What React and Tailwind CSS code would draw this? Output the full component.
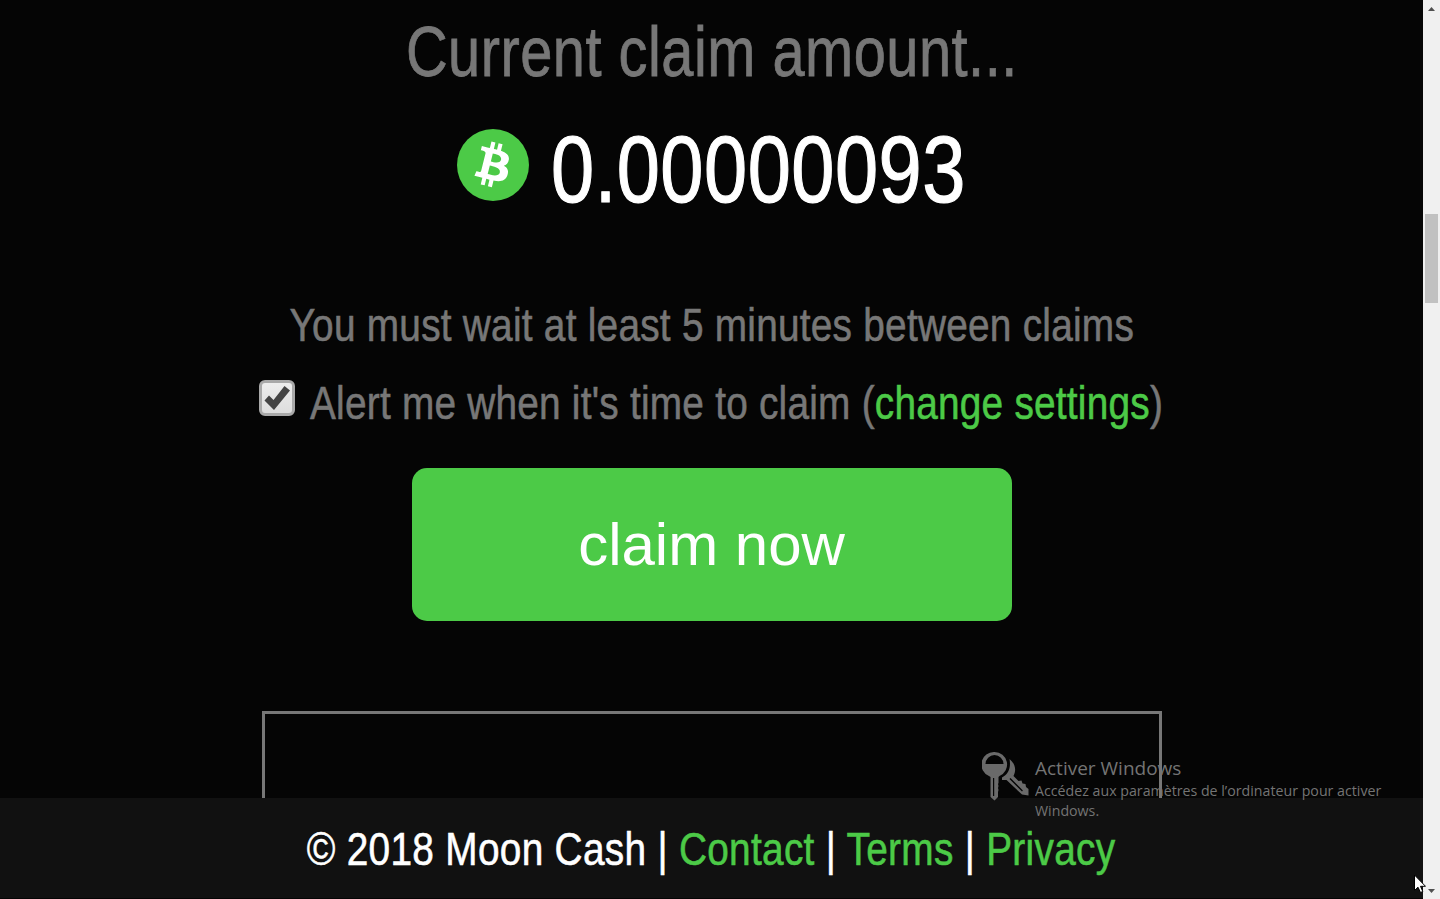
import React from "react";

const links = ["Contact", "Terms", "Privacy"];

const CoinIcon = () => (
  <svg viewBox="0 0 24 24" className="size-[72px] shrink-0">
    <circle cx="12" cy="12" r="12" fill="#4cca47" />
    <path
      fill="#fff"
      d="M17.288 10.291c.24-1.59-.974-2.45-2.64-3.03l.54-2.153-1.315-.33-.525 2.107c-.345-.087-.705-.167-1.064-.25l.526-2.127-1.32-.33-.54 2.165c-.285-.067-.565-.132-.84-.2l-1.815-.45-.35 1.407s.975.225.955.236c.535.136.63.486.615.766l-1.477 5.92c-.075.166-.24.406-.614.314.015.02-.96-.24-.96-.24l-.66 1.51 1.71.426.93.242-.54 2.19 1.32.327.54-2.17c.36.1.705.19 1.05.273l-.51 2.154 1.32.33.545-2.19c2.24.427 3.93.257 4.64-1.774.57-1.637-.03-2.58-1.217-3.196.854-.193 1.5-.76 1.68-1.93h.01zm-3.01 4.22c-.404 1.64-3.157.75-4.05.53l.72-2.9c.896.23 3.757.67 3.33 2.37zm.41-4.24c-.37 1.49-2.662.735-3.405.55l.654-2.64c.744.18 3.137.524 2.75 2.084v.006z"
    />
  </svg>
);

const Checkbox = () => (
  <svg viewBox="0 0 36 36" className="size-9 shrink-0">
    <defs>
      <linearGradient id="box" x1="0" y1="0" x2="0" y2="1">
        <stop offset="0" stopColor="#eeeeee" />
        <stop offset="1" stopColor="#dcdcdc" />
      </linearGradient>
    </defs>
    <rect x="1.5" y="1.5" width="33" height="33" rx="4.5" fill="url(#box)" stroke="#a9a9a9" strokeWidth="3" />
    <path d="M5.5 20.5 10 15.500l4.500 4.500L25.500 6l5.500 4.500L15 30z" fill="#444" />
  </svg>
);

const Keys = () => (
  <svg viewBox="0 0 48 50" className="h-[50px] w-12 shrink-0" fill="#6a6a6a">
    <path
      fillRule="evenodd"
      d="M12.500 1a12.500 12.500 0 0 1 5 24L16.500 26v6l-.500 1 .500 2-.500 2 .500 2-.500 2v5l-3.500 3.500L8.500 46V26L7 25A12.500 12.500 0 0 1 12.500 1zM3.500 13h18a9 9 0 0 0-18 0zM11 27v18h1.200v-18z"
    />
    <path
      fillRule="evenodd"
      d="M27.500 8c6 5 7 11 4 17l5 5 3-.500 1 3 3 .500.500 3 2.500 2v6.500l-6.500-1L24.500 29H20v-2.500C27 23 29 16 27.500 8zM27.500 28l12.500 12.500.9-.9L28.500 27z"
    />
  </svg>
);

const Watermark = () => (
  <div className="absolute left-[982px] top-[751px] flex gap-[5px] font-['Open_Sans',sans-serif] text-[#747474]">
    <Keys />
    <div className="pt-1 whitespace-nowrap">
      <p className="origin-left text-[19px] leading-[26px]">Activer Windows</p>
      <p className="origin-left scale-x-[1.014] text-[14px] leading-[19.5px]">
        Accédez aux paramètres de l’ordinateur pour activer
        <br />
        Windows.
      </p>
    </div>
  </div>
);

const Scrollbar = () => (
  <div className="flex h-full w-[17px] flex-col items-center bg-[#f0f0f0]">
    <svg viewBox="0 0 7 4" className="mt-[7px] h-1 w-[7px]" fill="#505050">
      <path d="M0 4h7L3.500 0z" />
    </svg>
    <div className="mt-[203px] h-[89px] w-[13px] bg-[#c1c1c1]" />
    <svg viewBox="0 0 7 4" className="mt-auto mb-[6px] h-1 w-[7px]" fill="#505050">
      <path d="M0 0h7L3.500 4z" />
    </svg>
  </div>
);

const App = () => {
  return (
    <div className="relative flex h-[899px] w-[1440px] overflow-hidden bg-[#050505] font-['Liberation_Sans',Arial,sans-serif] text-[#777]">
      <div className="flex min-w-0 flex-1 flex-col">
        <main className="flex h-[798px] flex-col items-center overflow-hidden whitespace-nowrap">
          <h2 className="h-[106px] shrink-0 scale-x-[0.825] text-[70px] leading-[105px] tracking-[0.0088em] [-webkit-text-stroke:0.8px]">
            Current claim amount...
          </h2>

          {/* Claim amount */}
          <div className="flex h-[127px] w-[510px] shrink-0 pt-[23px]">
            <CoinIcon />
            <span className="ml-[22px] origin-left scale-x-[0.825] text-[94px] leading-[82px] tracking-[0.0067em] text-white [-webkit-text-stroke:1.2px]">
              0.00000093
            </span>
          </div>

          <p className="mt-[53px] h-[79px] shrink-0 scale-x-[0.825] text-[47px] leading-[78px] tracking-[0.0065em] [-webkit-text-stroke:0.6px]">
            You must wait at least 5 minutes between claims
          </p>

          <label className="flex h-[76px] w-[906px] shrink-0 pt-[15px]">
            <Checkbox />
            <span className="ml-[15px] origin-left scale-x-[0.825] text-[47px] leading-[45px] tracking-[0.006em] [-webkit-text-stroke:0.6px]">
              Alert me when it's time to claim (
              <a className="text-[#4cca47]">change settings</a>)
            </span>
          </label>

          <button className="mt-[27px] h-[153px] w-[600px] shrink-0 rounded-[15px] bg-[#4cca47] text-[60px] text-white">
            claim now
          </button>

          <div className="mt-[90px] h-[250px] w-[900px] shrink-0 border-[3px] border-[#777]" />
        </main>

        <footer className="flex h-[100px] justify-center bg-[#111] pt-[3px] whitespace-nowrap text-white">
          <p className="scale-x-[0.825] text-[47px] leading-[96px] tracking-[0.0079em] [-webkit-text-stroke:0.6px]">
            © 2018 Moon Cash
            {links.map((link) => (
              <span key={link}>
                {" | "}
                <a className="text-[#4cca47]">{link}</a>
              </span>
            ))}
          </p>
        </footer>
      </div>

      <Scrollbar />
      <Watermark />

      {/* Pointer */}
      <svg viewBox="0 0 12 19" className="absolute left-[1414px] top-[874px] h-[19px] w-3">
        <path d="M.500 1v15.500l3.500-3.300 2.500 5.300 2.300-1L6.500 12.300h5z" fill="#fff" stroke="#000" />
      </svg>
    </div>
  );
};

export default App;
